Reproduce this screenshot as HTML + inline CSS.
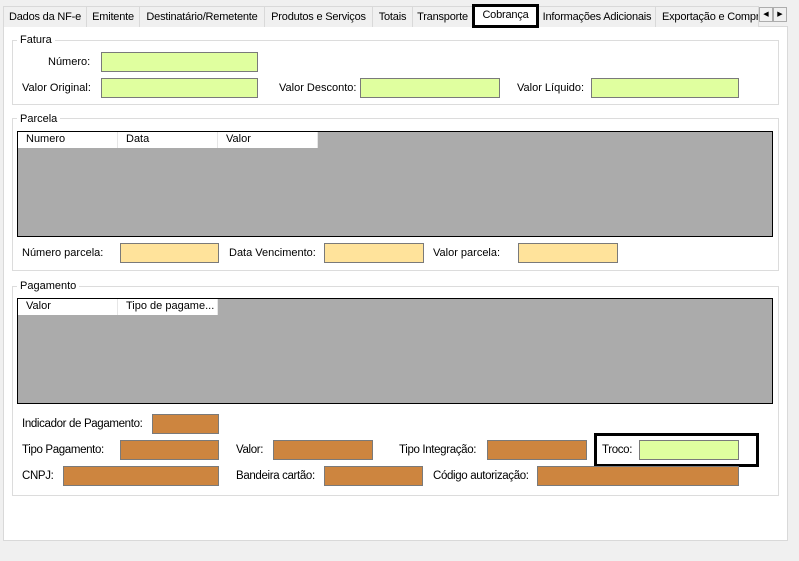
<!DOCTYPE html>
<html><head><style>
body{margin:0;width:799px;height:561px;background:#f0f0f0;position:relative;overflow:hidden;font-family:"Liberation Sans",sans-serif;font-size:11px;color:#000}
div,span{position:absolute;box-sizing:border-box}
.t{top:6px;height:21px;border:1px solid #d9d9d9;border-bottom:none;background:#f0f0f0;padding:4px 0 0 0;text-align:center;white-space:nowrap;overflow:hidden;letter-spacing:-0.2px}
.g{border:1px solid #dcdcdc}
.gl{background:#fff;padding:0 3px;line-height:13px}
.l{line-height:14px;white-space:nowrap}
.c{font-size:11.5px;letter-spacing:-0.35px}
.i{height:20px;border:1px solid #7a7a7a}
.G{background:#e0ff9f}
.Y{background:#ffe39b}
.O{background:#cd853f}
.grid{background:#ababab;border:1px solid #000}
.h{top:0;height:16px;background:#fff;padding:1px 0 0 8px;border-right:1px solid #e6e6e6;white-space:nowrap;overflow:hidden}
</style></head><body>
<div style="left:3px;top:26px;width:785px;height:515px;background:#fff;border:1px solid #d9d9d9"></div>
<div class="t" style="left:3px;width:84px">Dados da NF-e</div>
<div class="t" style="left:86px;width:54px">Emitente</div>
<div class="t" style="left:139px;width:126px">Destinatário/Remetente</div>
<div class="t" style="left:264px;width:109px">Produtos e Serviços</div>
<div class="t" style="left:372px;width:41px">Totais</div>
<div class="t" style="left:412px;width:61px">Transporte</div>
<div class="t" style="left:538px;width:118px">Informações Adicionais</div>
<div class="t" style="left:655px;width:104px;text-align:left;padding-left:6px">Exportação e Compras</div>
<div style="left:472px;top:4px;width:67px;height:24px;border:3px solid #000;background:#fff;text-align:center;padding-top:2px;letter-spacing:-0.2px">Cobrança</div>
<div style="left:759px;top:7px;width:14px;height:15px;border:1px solid #adadad;background:#f0f0f0;font-size:7px;text-align:center;line-height:13px">◀</div>
<div style="left:773px;top:7px;width:14px;height:15px;border:1px solid #adadad;background:#f0f0f0;font-size:7px;text-align:center;line-height:13px">▶</div>

<div class="g" style="left:12px;top:40px;width:767px;height:65px"></div>
<div class="gl" style="left:17px;top:34px">Fatura</div>
<div class="l" style="left:48px;top:55px">Número:</div>
<div class="i G" style="left:101px;top:52px;width:157px"></div>
<div class="l" style="left:22px;top:81px">Valor Original:</div>
<div class="i G" style="left:101px;top:78px;width:157px"></div>
<div class="l" style="left:279px;top:81px">Valor Desconto:</div>
<div class="i G" style="left:360px;top:78px;width:140px"></div>
<div class="l" style="left:517px;top:81px">Valor Líquido:</div>
<div class="i G" style="left:591px;top:78px;width:148px"></div>

<div class="g" style="left:12px;top:118px;width:767px;height:153px"></div>
<div class="gl" style="left:17px;top:113px">Parcela</div>
<div class="grid" style="left:17px;top:131px;width:756px;height:106px">
<div class="h" style="left:0;width:100px">Numero</div>
<div class="h" style="left:100px;width:100px">Data</div>
<div class="h" style="left:200px;width:100px">Valor</div></div>
<div class="l" style="left:22px;top:246px">Número parcela:</div>
<div class="i Y" style="left:120px;top:243px;width:99px"></div>
<div class="l" style="left:229px;top:246px">Data Vencimento:</div>
<div class="i Y" style="left:324px;top:243px;width:100px"></div>
<div class="l" style="left:433px;top:246px">Valor parcela:</div>
<div class="i Y" style="left:518px;top:243px;width:100px"></div>

<div class="g" style="left:12px;top:286px;width:767px;height:210px"></div>
<div class="gl" style="left:17px;top:280px">Pagamento</div>
<div class="grid" style="left:17px;top:298px;width:756px;height:106px">
<div class="h" style="left:0;width:100px">Valor</div>
<div class="h" style="left:100px;width:100px">Tipo de pagame...</div></div>
<div class="l c" style="left:22px;top:417px">Indicador de Pagamento:</div>
<div class="i O" style="left:152px;top:414px;width:67px"></div>
<div class="l c" style="left:22px;top:443px">Tipo Pagamento:</div>
<div class="i O" style="left:120px;top:440px;width:99px"></div>
<div class="l c" style="left:236px;top:443px">Valor:</div>
<div class="i O" style="left:273px;top:440px;width:100px"></div>
<div class="l c" style="left:399px;top:443px">Tipo Integração:</div>
<div class="i O" style="left:487px;top:440px;width:100px"></div>
<div style="left:594px;top:433px;width:165px;height:34px;border:3px solid #000"></div>
<div class="l c" style="left:602px;top:443px">Troco:</div>
<div class="i G" style="left:639px;top:440px;width:100px"></div>
<div class="l c" style="left:22px;top:469px">CNPJ:</div>
<div class="i O" style="left:63px;top:466px;width:156px"></div>
<div class="l c" style="left:236px;top:469px">Bandeira cartão:</div>
<div class="i O" style="left:324px;top:466px;width:99px"></div>
<div class="l c" style="left:433px;top:469px">Código autorização:</div>
<div class="i O" style="left:537px;top:466px;width:202px"></div>
</body></html>
